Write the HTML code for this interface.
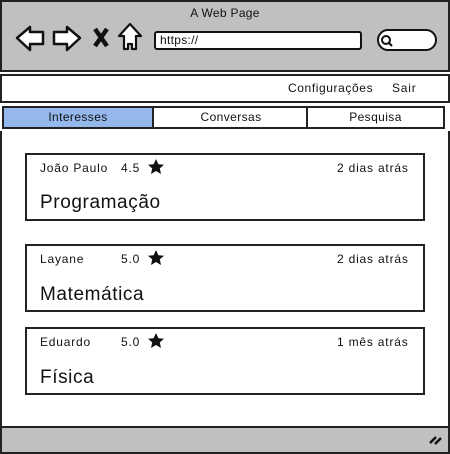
<!DOCTYPE html>
<html><head><meta charset="utf-8"><style>
*{margin:0;padding:0;box-sizing:border-box}
body{width:450px;height:454px;background:#fff;font-family:"Liberation Sans",sans-serif;color:#111;position:relative;overflow:hidden}
.a{position:absolute}
.b{border:2px solid #222}
.t{font-size:12px;position:absolute;white-space:nowrap;letter-spacing:0.8px}
.h{font-size:19px;letter-spacing:0.6px}
</style></head><body>
<div class="a" style="left:0;top:0;width:450px;height:72px;background:#c0c0c0;border:2px solid #222"></div>
<div class="t" style="left:0;width:450px;text-align:center;top:6px;letter-spacing:0.3px">A Web Page</div>
<svg class="a" style="left:0;top:0" width="450" height="72">
<path d="M17 38 L30 27 L30 32 L43 32 L43 44 L30 44 L30 50 Z" fill="#fff" stroke="#111" stroke-width="2.5" stroke-linejoin="round"/>
<path d="M80 38 L67 27 L67 32 L54 32 L54 44 L67 44 L67 50 Z" fill="#fff" stroke="#111" stroke-width="2.5" stroke-linejoin="round"/>
<path d="M95 29 L107 46 M107 29 L95 46" stroke="#111" stroke-width="4.5"/>
<path d="M130 24 L141 36 L136 36 L136 49 L132 49 L132 44 L128 44 L128 49 L124 49 L124 36 L119 36 Z" fill="#fff" stroke="#111" stroke-width="2.2" stroke-linejoin="round"/>
<rect x="155" y="32" width="206" height="17" rx="2" fill="#fff" stroke="#111" stroke-width="2"/>
<rect x="378" y="30" width="58" height="20" rx="10" fill="#fff" stroke="#111" stroke-width="2"/>
<circle cx="386" cy="40" r="4" fill="none" stroke="#111" stroke-width="2"/>
<path d="M389 43 L392 46" stroke="#111" stroke-width="2"/>
</svg>
<div class="t" style="left:160px;top:33px;letter-spacing:0.3px">https://</div>
<div class="a b" style="left:0;top:74px;width:450px;height:29px"></div>
<div class="t" style="left:288px;top:81px;letter-spacing:0.6px">Configurações</div>
<div class="t" style="left:392px;top:81px">Sair</div>
<div class="a b" style="left:2px;top:106px;width:152px;height:23px;background:#94b8ec"></div>
<div class="a b" style="left:154px;top:106px;width:154px;height:23px;border-left:0"></div>
<div class="a b" style="left:306px;top:106px;width:139px;height:23px"></div>
<div class="t" style="left:2px;width:152px;text-align:center;top:110px;letter-spacing:0.4px">Interesses</div>
<div class="t" style="left:154px;width:154px;text-align:center;top:110px;letter-spacing:0.4px">Conversas</div>
<div class="t" style="left:306px;width:139px;text-align:center;top:110px;letter-spacing:0.4px">Pesquisa</div>
<div class="a" style="left:0;top:131px;width:450px;height:323px;border:2px solid #222;border-top:0"></div>
<div class="a" style="left:2px;top:426px;width:446px;height:26px;background:#c0c0c0;border-top:2px solid #222"></div>
<svg class="a" style="left:428px;top:432px" width="16" height="14"><path d="M2 11 L8 5 M7 12 L13 6" stroke="#111" stroke-width="2.5"/></svg>

<div class="a b" style="left:25px;top:153px;width:400px;height:68px"></div>
<div class="t" style="left:40px;top:161px">João Paulo</div>
<div class="t" style="left:121px;top:161px">4.5</div>
<div class="t" style="left:337px;top:161px">2 dias atrás</div>
<div class="t h" style="left:40px;top:192px">Programação</div>

<div class="a b" style="left:25px;top:244px;width:400px;height:68px"></div>
<div class="t" style="left:40px;top:252px">Layane</div>
<div class="t" style="left:121px;top:252px">5.0</div>
<div class="t" style="left:337px;top:252px">2 dias atrás</div>
<div class="t h" style="left:40px;top:284px">Matemática</div>

<div class="a b" style="left:25px;top:327px;width:400px;height:68px"></div>
<div class="t" style="left:40px;top:335px">Eduardo</div>
<div class="t" style="left:121px;top:335px">5.0</div>
<div class="t" style="left:337px;top:335px">1 mês atrás</div>
<div class="t h" style="left:40px;top:367px">Física</div>

<svg class="a" style="left:0;top:0" width="450" height="454">
<g fill="#111">
<path id="s" d="M156 159 L158.4 164.2 L164 164.7 L159.8 168.4 L161 174 L156 171 L151 174 L152.2 168.4 L148 164.7 L153.6 164.2 Z"/>
<use href="#s" transform="translate(0,91)"/>
<use href="#s" transform="translate(0,174)"/>
</g></svg>
</body></html>
